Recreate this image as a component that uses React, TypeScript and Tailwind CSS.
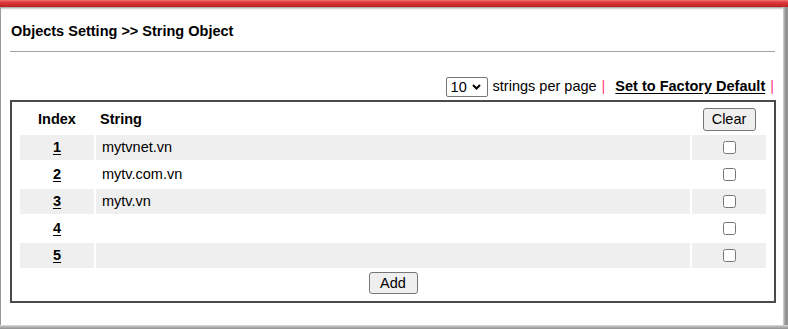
import React from "react";

const rows = [
  { idx: 1, str: "mytvnet.vn" },
  { idx: 2, str: "mytv.com.vn" },
  { idx: 3, str: "mytv.vn" },
  { idx: 4, str: "" },
  { idx: 5, str: "" },
];

export default function App() {
  return (
    <div
      className="w-[788px] h-[329px] flex flex-col bg-white text-black text-[14.5px] overflow-hidden"
      style={{ fontFamily: '"Liberation Sans", Arial, sans-serif' }}
    >
      <div className="h-[7px] shrink-0 bg-[linear-gradient(to_bottom,#f27474_0%,#e03c3c_30%,#d02a2a_70%,#bc1f1f_100%)]" />
      <div className="flex flex-1 min-h-0">
        <div className="w-px bg-[#9a9a9a]" />
        <div className="flex-1 flex flex-col">
          <div className="h-[3px] bg-[linear-gradient(to_bottom,#9a9a9a,#d8d8d8,#ffffff)]" />
          <div className="flex-1 flex flex-col pl-[9px] pr-[7px]">
            <div className="mt-[13px] leading-[17px] font-bold pl-px">
              Objects Setting &gt;&gt; String Object
            </div>
            <div className="mt-[11px] h-px bg-[#a0a0a0] mr-px" />
            <div className="mt-[25px] h-[20px] flex items-center justify-end pr-[2px]">
              <div className="h-[20px] w-[42px] flex items-center justify-between border border-[#767676] rounded-[2px] pl-[4px] pr-[6px] bg-white">
                <span className="leading-none">10</span>
                <svg width="9" height="6" viewBox="0 0 9 6">
                  <path d="M1 1 L4.5 4.5 L8 1" fill="none" stroke="#000" strokeWidth="2" />
                </svg>
              </div>
              <span className="ml-[5px]">strings per page</span>
              <span className="ml-[5px] text-[#ff3d7f]">|</span>
              <a className="ml-[10px] font-bold underline underline-offset-2">Set to Factory Default</a>
              <span className="ml-[5px] text-[#ff3d7f]">|</span>
            </div>
            <div className="mt-[3px] border-2 border-[#4a4a4a] px-[8px] pt-[6px] pb-[7px] flex flex-col">
              <div className="grid grid-cols-[74px_594px_74px] gap-x-[2px] h-[23px] items-center font-bold">
                <div className="text-center">Index</div>
                <div className="pl-[4px]">String</div>
                <div className="flex justify-center">
                  <button className="h-[23px] w-[53px] bg-[#efefef] border border-[#767676] rounded-[3px] font-normal">
                    Clear
                  </button>
                </div>
              </div>
              <div className="mt-[4px] flex flex-col gap-y-[2px]">
                {rows.map((r) => {
                  const bg = r.idx % 2 === 1 ? "bg-[#efefef]" : "bg-white";
                  return (
                    <div key={r.idx} className="grid grid-cols-[74px_594px_74px] gap-x-[2px] h-[25px]">
                      <div className={`${bg} flex items-center justify-center font-bold underline underline-offset-2`}>
                        {r.idx}
                      </div>
                      <div className={`${bg} flex items-center pl-[6px]`}>{r.str}</div>
                      <div className={`${bg} flex items-center justify-center`}>
                        <input type="checkbox" className="w-[13px] h-[13px] m-0" />
                      </div>
                    </div>
                  );
                })}
              </div>
              <div className="mt-[4px] flex justify-center">
                <button className="h-[22px] w-[49px] bg-[#efefef] border border-[#767676] rounded-[3px]">
                  Add
                </button>
              </div>
            </div>
          </div>
        </div>
        <div className="w-[5px] bg-[linear-gradient(to_right,#d4d4d4,#a8a8a8,#8a8a8a,#a0a0a0)]" />
      </div>
      <div className="h-[4px] shrink-0 bg-[linear-gradient(to_bottom,#dcdcdc,#b0b0b0,#909090)]" />
    </div>
  );
}
